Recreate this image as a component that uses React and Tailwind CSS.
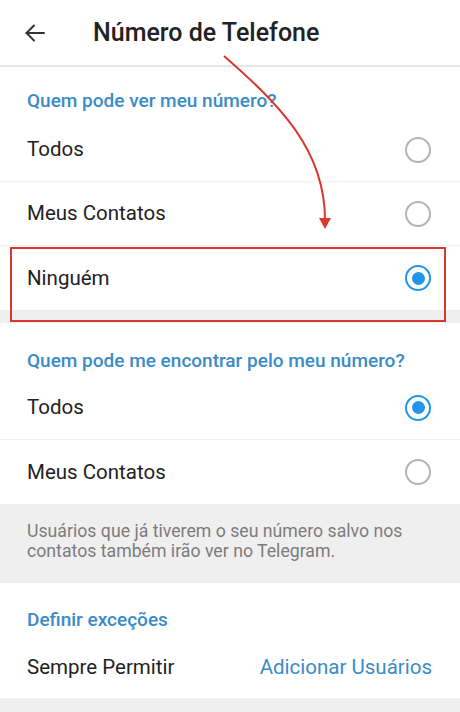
import React from 'react';

const Radio = ({ checked }) =>
  checked ? (
    <span className="flex h-[26px] w-[26px] items-center justify-center rounded-full border-[2.5px] border-[#2196e8]">
      <span className="h-[13px] w-[13px] rounded-full bg-[#2196e8]" />
    </span>
  ) : (
    <span className="h-[26px] w-[26px] rounded-full border-2 border-[#b3b3b3]" />
  );

const Row = ({ label, checked, divider, h = 'h-16' }) => (
  <div className={`flex ${h} items-center justify-between pl-[27px] pr-[29px] ${divider ? 'border-b border-[#f1f1f1]' : ''}`}>
    <span className="text-[20.5px] text-[#222]">{label}</span>
    <Radio checked={checked} />
  </div>
);

const SectionTitle = ({ children, cls }) => (
  <div className={`flex items-end pl-[27px] ${cls}`}>
    <span className="text-[19px] font-medium text-[#3a8cc8]">{children}</span>
  </div>
);

export default function App() {
  return (
    <div className="relative h-[712px] w-[460px] overflow-hidden bg-[#efefef]" style={{ fontFamily: 'Roboto, "Noto Sans", sans-serif' }}>
      {/* top bar */}
      <div className="flex h-[67px] items-center border-b-2 border-[#e6e6e6] bg-white">
        <svg className="ml-[23px]" width="24" height="24" viewBox="0 0 24 24" fill="none" stroke="#333" strokeWidth="2" strokeLinecap="round" strokeLinejoin="round">
          <path d="M21 12H3.5" />
          <path d="M11 4.5L3.5 12l7.5 7.5" />
        </svg>
        <h1 className="ml-[46px] text-[25px] font-medium text-[#222]">Número de Telefone</h1>
      </div>

      {/* who can see */}
      <div className="bg-white">
        <SectionTitle cls="h-[51px] pb-[3px]">Quem pode ver meu número?</SectionTitle>
        <Row label="Todos" divider />
        <Row label="Meus Contatos" divider />
        <Row label="Ninguém" checked />
      </div>

      <div className="h-[13px]" />

      {/* who can find */}
      <div className="bg-white">
        <SectionTitle cls="h-[53px] pb-[1px]">Quem pode me encontrar pelo meu número?</SectionTitle>
        <Row label="Todos" checked divider />
        <Row label="Meus Contatos" />
      </div>

      <div className="h-[79px] pl-[27px] pr-4 pt-[17px] text-[17.7px] leading-[20px] text-[#7c7c7c]">
        Usuários que já tiverem o seu número salvo nos contatos também irão ver no Telegram.
      </div>

      {/* exceptions */}
      <div className="bg-white">
        <SectionTitle cls="h-[53px] pb-[2px]">Definir exceções</SectionTitle>
        <div className="flex h-[62px] items-center justify-between pl-[27px] pr-[28px]">
          <span className="text-[20.5px] text-[#222]">Sempre Permitir</span>
          <span className="text-[20.5px] text-[#3a8cc8]">Adicionar Usuários</span>
        </div>
      </div>

      {/* annotation overlay */}
      <div className="absolute left-[10px] top-[247px] h-[75px] w-[436px] border-2 border-[#d8392c]" />
      <svg className="absolute left-0 top-0" width="460" height="712" viewBox="0 0 460 712" fill="none">
        <path d="M224 56 C 280 105, 325 150, 325 220" stroke="#d8392c" strokeWidth="2" />
        <path d="M319 218 L331 218 L325 229 Z" fill="#d8392c" />
      </svg>
    </div>
  );
}
